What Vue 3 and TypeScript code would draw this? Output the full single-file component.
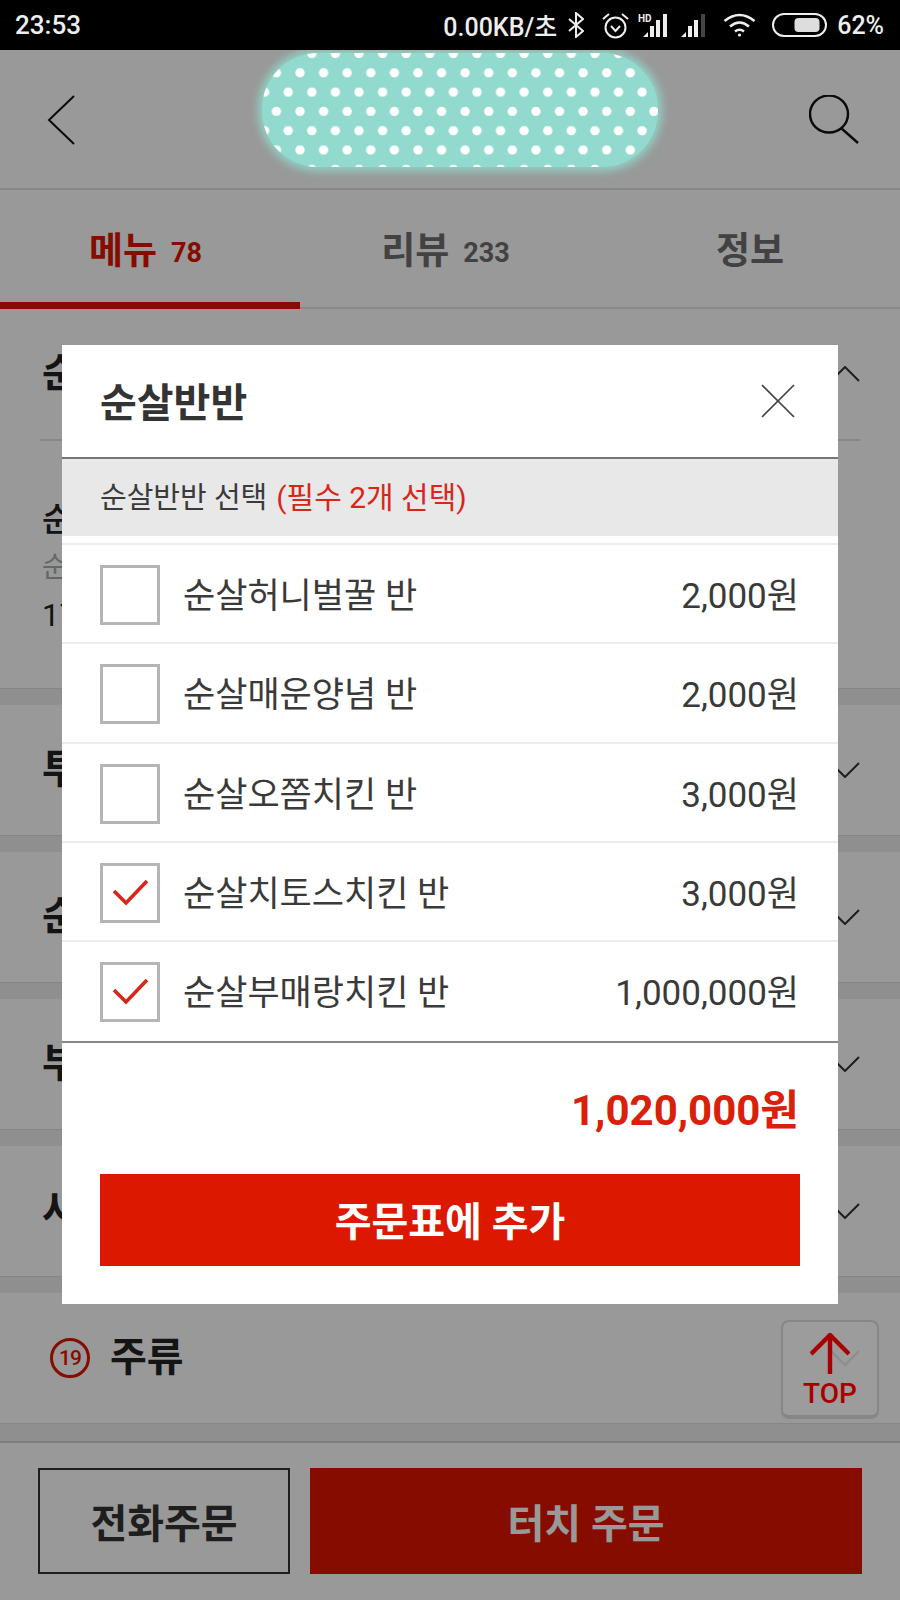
<script setup lang="ts">
interface Section { title: string }
interface Choice { name: string; price: string; checked: boolean }

const sections: Section[] = [
  { title: '투움바치킨' },
  { title: '순살치킨' },
  { title: '부분육' },
  { title: '사이드' }
]
const choices: Choice[] = [
  { name: '순살허니벌꿀 반', price: '2,000원', checked: false },
  { name: '순살매운양념 반', price: '2,000원', checked: false },
  { name: '순살오쫌치킨 반', price: '3,000원', checked: false },
  { name: '순살치토스치킨 반', price: '3,000원', checked: true },
  { name: '순살부매랑치킨 반', price: '1,000,000원', checked: true }
]
</script>

<template>
  <div class="screen">
    <div class="status">
      <span class="clock">23:53</span>
      <div class="status-right">
        <span class="speed">0.00KB/초</span>
        <svg class="i-bt" width="16" height="26" viewBox="0 0 16 26" fill="none" stroke="#eee" stroke-width="2"><polyline points="1,7 15,19 8,25 8,1 15,7 1,19" /></svg>
        <svg class="i-alarm" width="29" height="27" viewBox="0 0 29 27" fill="none" stroke="#eee" stroke-width="2"><circle cx="14.5" cy="15.5" r="10" /><polyline points="10,14 14.5,19 19,14" /><path d="M2 7 L8 2 M27 7 L21 2" /></svg>
        <svg class="i-hd" width="30" height="24" viewBox="0 0 30 24" fill="#eee"><text x="0" y="9" font-size="10" font-weight="700" font-family="Roboto, sans-serif">HD</text><polygon points="5,24 10,19 10,24" /><rect x="12" y="13" width="4" height="11" /><rect x="18" y="7" width="4" height="17" /><rect x="25" y="1" width="4" height="23" /></svg>
        <svg class="i-sig" width="26" height="24" viewBox="0 0 26 24" fill="#eee"><polygon points="0,24 5,19 5,24" /><rect x="7" y="13" width="4" height="11" /><rect x="13" y="7" width="4" height="17" /><rect x="20" y="1" width="4" height="23" fill="#444" /></svg>
        <svg class="i-wifi" width="33" height="24" viewBox="0 0 33 24" fill="none" stroke="#eee" stroke-width="2.6"><path d="M1.5 8 Q16.5 -4 31.5 8" /><path d="M7 13.5 Q16.5 5.5 26 13.5" /><path d="M12 18.5 Q16.5 15 21 18.5" /><circle cx="16.5" cy="22" r="1.6" fill="#eee" stroke="none" /></svg>
        <svg class="i-bat" width="55" height="24" viewBox="0 0 55 24" fill="none"><rect x="1" y="1" width="53" height="22" rx="11" stroke="#eee" stroke-width="2" /><rect x="22.5" y="5" width="25" height="14" rx="4" fill="#ddd" /></svg>
        <span class="pct">62%</span>
      </div>
    </div>

    <header class="top">
      <svg width="28" height="50" viewBox="0 0 28 50" fill="none" stroke="#111" stroke-width="2"><polyline points="27,1 2,25 27,49" /></svg>
      <svg width="50" height="50" viewBox="0 0 50 50" fill="none" stroke="#111" stroke-width="2.4"><ellipse cx="20" cy="19" rx="19" ry="18.5" /><line x1="32" y1="33" x2="49" y2="48" /></svg>
    </header>

    <nav class="tabs">
      <div class="tab active"><b>메뉴</b><em>78</em></div>
      <div class="tab"><b>리뷰</b><em>233</em></div>
      <div class="tab"><b>정보</b></div>
    </nav>

    <section class="open-sec">
      <div class="row-head">
        <h2>순살반반</h2>
        <svg class="chev" width="30" height="16" viewBox="0 0 30 16" fill="none" stroke="#333" stroke-width="2"><polyline points="1,15 15,1 29,15" /></svg>
      </div>
      <div class="item">
        <div class="i-name">순살반반</div>
        <div class="i-desc">순살 두 가지 맛</div>
        <div class="i-price">17,000원</div>
      </div>
    </section>

    <section v-for="s in sections" :key="s.title" class="sec">
      <div class="row-head">
        <h2>{{ s.title }}</h2>
        <svg class="chev" width="30" height="16" viewBox="0 0 30 16" fill="none" stroke="#333" stroke-width="2"><polyline points="1,1 15,15 29,1" /></svg>
      </div>
    </section>

    <section class="sec">
      <div class="row-head">
        <div class="liquor">
          <span class="age">19</span>
          <h2>주류</h2>
        </div>
        <svg class="chev" width="30" height="16" viewBox="0 0 30 16" fill="none" stroke="#333" stroke-width="2"><polyline points="1,1 15,15 29,1" /></svg>
      </div>
    </section>

    <div class="band"></div>

    <footer class="bottom">
      <div class="call">전화주문</div>
      <div class="order">터치 주문</div>
    </footer>

    <div class="dim"></div>

    <div class="to-top">
      <svg width="40" height="42" viewBox="0 0 40 42" fill="none" stroke="#a80000" stroke-width="4.4"><polyline points="1,21 20,2 39,21" /><line x1="20" y1="3" x2="20" y2="41" /></svg>
      <span>TOP</span>
    </div>

    <div class="blob"><div class="dots"></div></div>

    <div class="modal">
      <div class="m-title">
        <h3>순살반반</h3>
        <svg width="34" height="34" viewBox="0 0 34 34" fill="none" stroke="#444" stroke-width="1.7"><line x1="1" y1="1" x2="33" y2="33" /><line x1="33" y1="1" x2="1" y2="33" /></svg>
      </div>
      <div class="m-sub">순살반반 선택 <span>(필수 2개 선택)</span></div>
      <ul class="m-list">
        <li v-for="c in choices" :key="c.name">
          <span class="box">
            <svg v-if="c.checked" width="54" height="54" viewBox="0 0 54 54" fill="none" stroke="#d8261a" stroke-width="3.6"><polyline points="11,25 23,37 44,15" /></svg>
          </span>
          <span class="c-name">{{ c.name }}</span>
          <span class="c-price">{{ c.price }}</span>
        </li>
      </ul>
      <div class="m-total">1,020,000원</div>
      <div class="m-add">주문표에 추가</div>
    </div>
  </div>
</template>

<style>
html, body { margin: 0; background: #fff; }
</style>

<style scoped>
.screen {
  position: relative;
  width: 900px;
  height: 1600px;
  overflow: hidden;
  display: flex;
  flex-direction: column;
  background: #fff;
  font-family: Roboto, "Noto Sans CJK KR", sans-serif;
  color: #333;
}
.status {
  position: relative;
  z-index: 3;
  height: 50px;
  flex: none;
  background: #000;
  color: #eee;
  display: flex;
  align-items: center;
  justify-content: space-between;
  padding: 0 16px 0 15px;
  font-weight: 500;
}
.clock { font-size: 26px; }
.status-right { display: flex; align-items: center; }
.speed { font-size: 25px; }
.pct { font-size: 25px; margin-left: 10px; }
.i-bt { margin-left: 11px; }
.i-alarm { margin-left: 17px; }
.i-hd { margin-left: 8px; }
.i-sig { margin-left: 13px; }
.i-wifi { margin-left: 16px; }
.i-bat { margin-left: 16px; }

.top {
  flex: none;
  height: 140px;
  box-sizing: border-box;
  padding: 2px 41px 0 47px;
  display: flex;
  align-items: center;
  justify-content: space-between;
  border-bottom: 2px solid #e2e2e2;
}
.tabs {
  flex: none;
  height: 119px;
  box-sizing: border-box;
  display: flex;
  border-bottom: 2px solid #e6e6e6;
}
.tab {
  position: relative;
  flex: 1;
  display: flex;
  justify-content: center;
  align-items: flex-start;
  gap: 14px;
  padding-top: 37px;
  color: #6e6e6e;
}
.tab b { font-size: 37px; font-weight: 700; line-height: 50px; }
.tab em { font-style: normal; font-size: 27px; font-weight: 700; line-height: 52px; margin-right: 9px; }
.tab.active { color: #e01500; }
.tab.active::after {
  content: "";
  position: absolute;
  left: 0;
  right: 0;
  bottom: -2px;
  height: 7px;
  background: #e01500;
}

.row-head {
  height: 130px;
  box-sizing: border-box;
  padding: 0 42px;
  display: flex;
  align-items: center;
  justify-content: space-between;
}
h2 { margin: 0; font-size: 40px; font-weight: 700; color: #222; line-height: 50px; }
.chev { margin-right: -2px; }
.open-sec .row-head {
  margin: 0 40px;
  padding: 0 2px;
  border-bottom: 2px solid #e2e2e2;
  height: 132px;
}
.open-sec { height: 379px; flex: none; box-sizing: border-box; }
.item { padding: 57px 42px 0; }
.i-name { font-size: 33px; font-weight: 500; color: #222; line-height: 44px; }
.i-desc { font-size: 28px; color: #aaa; line-height: 44px; margin-top: 4px; }
.i-price { font-size: 31px; color: #222; line-height: 44px; margin-top: 4px; }
.sec {
  flex: none;
  border-top: 1px solid #e0e0e0;
  padding-top: 16px;
  background: linear-gradient(#eee, #eee) top / 100% 16px no-repeat;
}
.liquor { display: flex; align-items: center; gap: 20px; padding-left: 8px; }
.age {
  width: 40px;
  height: 40px;
  box-sizing: border-box;
  border: 3px solid #e01500;
  border-radius: 50%;
  color: #e01500;
  font-size: 21px;
  font-weight: 500;
  letter-spacing: -1px;
  display: flex;
  align-items: center;
  justify-content: center;
}
.band {
  flex: none;
  height: 18px;
  background: #eee;
  border-top: 1px solid #e0e0e0;
  box-sizing: border-box;
}
.bottom {
  flex: 1;
  border-top: 2px solid #d0d0d0;
  padding: 25px 38px 26px 38px;
  display: flex;
  gap: 20px;
  box-sizing: border-box;
}
.call, .order {
  box-sizing: border-box;
  display: flex;
  align-items: center;
  justify-content: center;
  font-size: 40px;
  font-weight: 700;
}
.call { width: 252px; border: 2px solid #333; color: #333; }
.order { flex: 1; background: #e01500; color: #fff; }

.to-top {
  position: absolute;
  left: 781px;
  top: 1320px;
  width: 98px;
  height: 99px;
  box-sizing: border-box;
  border: 2px solid #868686;
  border-bottom-width: 4px;
  border-radius: 8px;
  background: rgba(156, 156, 156, 0.88);
  display: flex;
  flex-direction: column;
  align-items: center;
  padding-top: 11px;
  color: #a80000;
  font-size: 28px;
  font-weight: 500;
  line-height: 32px;
}
.to-top span { margin-top: 3px; }
.dim {
  position: absolute;
  left: 0;
  right: 0;
  top: 50px;
  bottom: 0;
  background: rgba(0, 0, 0, 0.4);
}
.blob {
  position: absolute;
  left: 262px;
  top: 53px;
  width: 396px;
  height: 114px;
  border-radius: 56px;
  background: #91dacd;
  box-shadow: 0 0 9px 4px rgba(145, 218, 205, 0.85);
  overflow: hidden;
}
.dots {
  position: absolute;
  inset: 0;
  background-image:
    radial-gradient(circle 5px, #fff 85%, transparent 100%),
    radial-gradient(circle 5px, #fff 85%, transparent 100%);
  background-size: 23.6px 38.6px;
  background-position: 26.2px 0.5px, 14.4px 19.8px;
}

.modal {
  position: absolute;
  left: 62px;
  top: 345px;
  width: 776px;
  height: 959px;
  background: #fff;
  display: flex;
  flex-direction: column;
}
.m-title {
  flex: none;
  height: 112px;
  box-sizing: content-box;
  padding: 0 43px 0 38px;
  display: flex;
  align-items: center;
  justify-content: space-between;
  border-bottom: 2px solid #777;
}
h3 { margin: 5px 0 0; font-size: 40px; font-weight: 700; color: #333; line-height: 50px; }
.m-title svg { margin-top: -1px; }
.m-sub {
  flex: none;
  height: 77px;
  box-sizing: border-box;
  padding: 0 38px 5px;
  background: #e8e8e8;
  display: flex;
  align-items: center;
  gap: 9px;
  font-size: 29px;
  color: #3a3a3a;
}
.m-sub span { color: #d8261a; font-size: 30px; }
.m-list {
  flex: none;
  list-style: none;
  margin: 0;
  padding: 7px 0 2px;
  border-bottom: 2px solid #888;
}
.m-list li {
  height: 99.25px;
  box-sizing: border-box;
  border-top: 2px solid #ececec;
  padding: 3px 39px 0 38px;
  display: flex;
  align-items: center;
  font-size: 35px;
  color: #3a3a3a;
}
.c-name, .c-price { margin-top: -5px; }
.box {
  flex: none;
  width: 60px;
  height: 60px;
  box-sizing: border-box;
  border: 3px solid #b5b5b5;
  margin-right: 23px;
}
.box svg { display: block; }
.c-price { margin-left: auto; }
.m-total {
  flex: none;
  height: 131px;
  padding: 0 39px 5px 38px;
  box-sizing: border-box;
  display: flex;
  align-items: center;
  justify-content: flex-end;
  font-size: 42px;
  font-weight: 700;
  color: #d8200a;
}
.m-add {
  flex: none;
  height: 92px;
  box-sizing: border-box;
  padding-bottom: 2px;
  margin: 0 38px;
  background: #dc1900;
  color: #fff;
  display: flex;
  align-items: center;
  justify-content: center;
  font-size: 40px;
  font-weight: 700;
}
</style>
